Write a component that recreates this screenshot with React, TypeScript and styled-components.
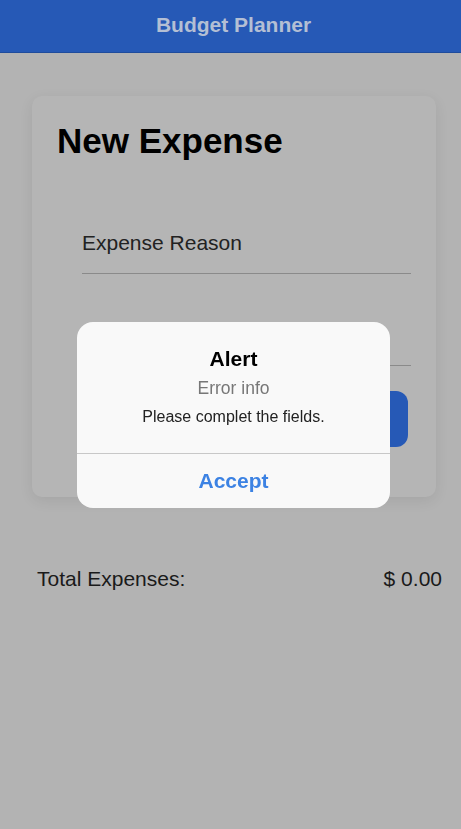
import React from "react";
import styled, { createGlobalStyle } from "styled-components";

const Global = createGlobalStyle`
  html, body { margin: 0; padding: 0; background: #b3b3b3; }
  body { font-family: "Liberation Sans", Arial, sans-serif; }
  * { box-sizing: border-box; }
`;

const Page = styled.div`
  min-height: 829px;
  background: #b3b3b3;
`;

const Header = styled.header`
  height: 53px;
  background: #2659b6;
  border-bottom: 1px solid #1f4c9c;
  display: flex;
  align-items: center;
  justify-content: center;
  padding-left: 6px;
`;

const HeaderTitle = styled.h1`
  margin: -2px 0 0;
  font-size: 21px;
  font-weight: 700;
  color: #b4bfd4;
  line-height: 24px;
`;

const Card = styled.section`
  margin: 43px 25px 0 32px;
  background: #b5b5b5;
  border-radius: 10px;
  box-shadow: 0 4px 14px rgba(0, 0, 0, 0.08);
  padding: 25px 28px 50px 25px;
  display: flex;
  flex-direction: column;
`;

const CardTitle = styled.h2`
  margin: 0;
  font-size: 35px;
  line-height: 40px;
  font-weight: 700;
  color: #000;
`;

const Field = styled.div<{ $top: number }>`
  margin: ${(p) => p.$top}px -3px 0 25px;
  padding: 10px 0 18px;
  border-bottom: 1px solid #8a8a8a;
  font-size: 21px;
  line-height: 24px;
  height: 53px;
  color: #222;
`;

const Submit = styled.div`
  margin: 25px 0 0 25px;
  height: 56px;
  background: #2659b6;
  border-radius: 12px;
`;

const Summary = styled.div`
  margin-top: 70px;
  padding: 0 19px 0 37px;
  display: flex;
  justify-content: space-between;
  font-size: 21px;
  line-height: 24px;
  color: #1a1a1a;
`;

const Overlay = styled.div`
  position: fixed;
  inset: 0;
  display: flex;
  align-items: center;
  justify-content: center;
  padding-left: 6px;
`;

const AlertBox = styled.div`
  width: 313px;
  background: #f9f9f9;
  border-radius: 16px;
  display: flex;
  flex-direction: column;
  text-align: center;
  overflow: hidden;
`;

const AlertBody = styled.div`
  padding: 25px 16px 27px;
  display: flex;
  flex-direction: column;
`;

const AlertTitle = styled.div`
  font-size: 21px;
  line-height: 24px;
  font-weight: 700;
  color: #000;
`;

const AlertSub = styled.div`
  margin-top: 6px;
  font-size: 17.5px;
  line-height: 22px;
  color: #777;
`;

const AlertMsg = styled.div`
  margin-top: 9px;
  font-size: 16px;
  line-height: 18px;
  color: #222;
`;

const AlertAction = styled.button`
  border: none;
  border-top: 1px solid #c8c8c8;
  background: transparent;
  height: 55px;
  font-family: inherit;
  font-size: 21px;
  font-weight: 700;
  color: #3c82e3;
  padding: 0;
`;

export default function App() {
  return (
    <>
      <Global />
      <Page>
        <Header>
          <HeaderTitle>Budget Planner</HeaderTitle>
        </Header>
        <Card>
          <CardTitle>New Expense</CardTitle>
          <Field $top={60}>Expense Reason</Field>
          <Field $top={39} />
          <Submit />
        </Card>
        <Summary>
          <span>Total Expenses:</span>
          <span>$ 0.00</span>
        </Summary>
      </Page>
      <Overlay>
        <AlertBox>
          <AlertBody>
            <AlertTitle>Alert</AlertTitle>
            <AlertSub>Error info</AlertSub>
            <AlertMsg>Please complet the fields.</AlertMsg>
          </AlertBody>
          <AlertAction>Accept</AlertAction>
        </AlertBox>
      </Overlay>
    </>
  );
}
